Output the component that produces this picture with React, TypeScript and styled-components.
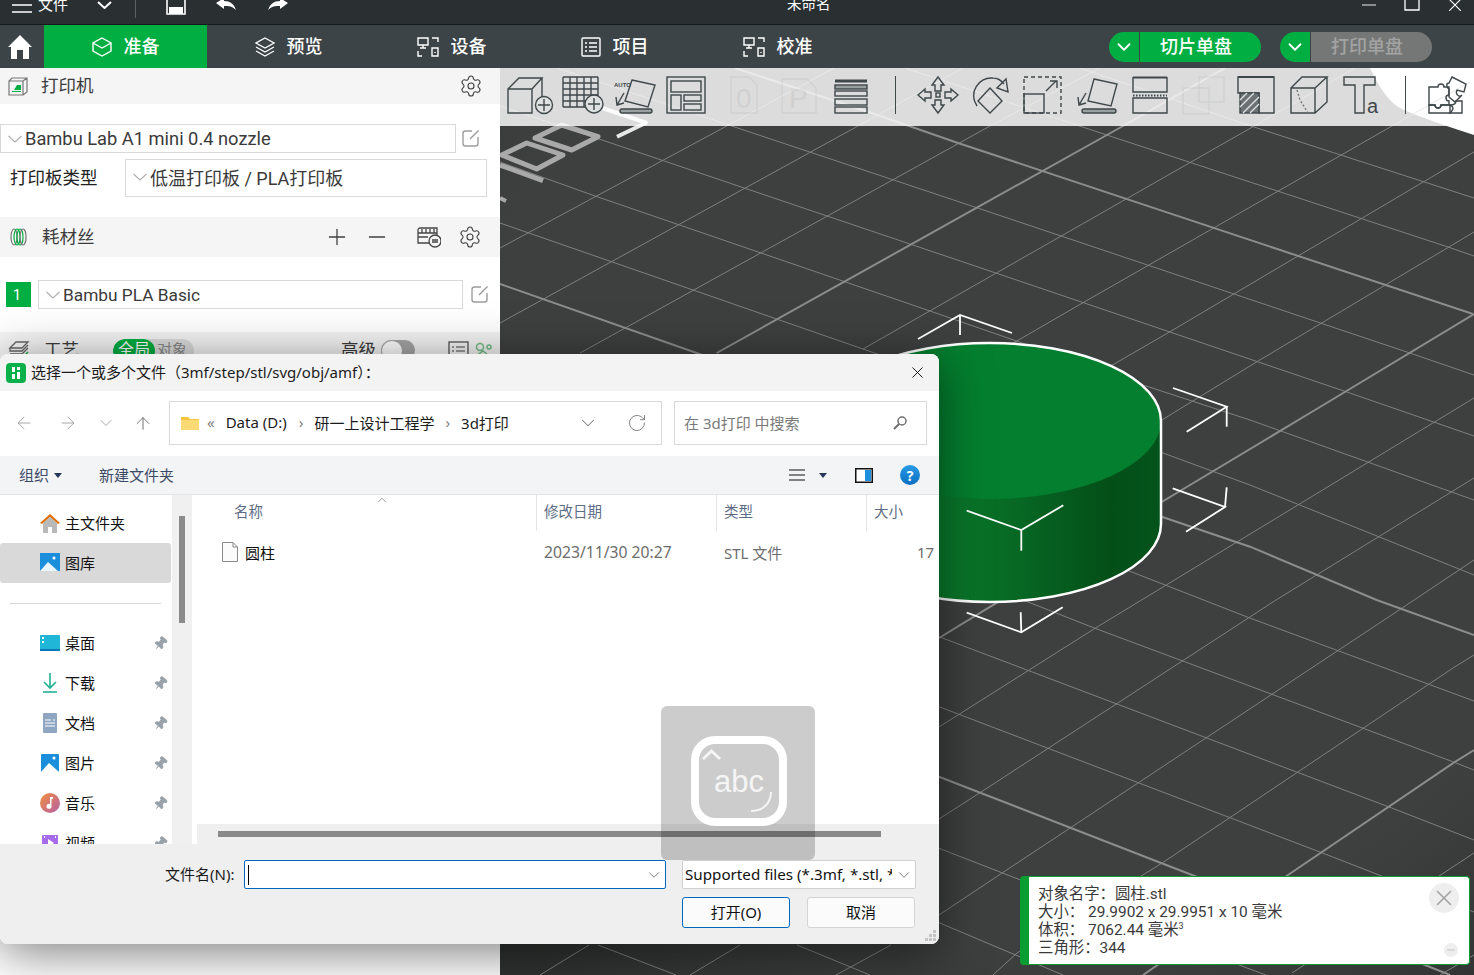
import React from "react";
import styled, { createGlobalStyle } from "styled-components";
import { ArrowLeft, ArrowRight, ArrowUp, ChevronDown, ChevronUp, Minus, Plus, Pin, RotateCw, Settings, X } from "lucide-react";

const APP_FONT = `Roboto, "Noto Sans CJK SC", sans-serif`;
const WIN_FONT = `"Noto Sans", "Noto Sans CJK SC", sans-serif`;
const GREEN = "#00ae42";

const Global = createGlobalStyle`
  html, body { margin: 0; padding: 0; background: #fff; }
  * { box-sizing: border-box; }
`;

const Page = styled.div`
  position: relative; width: 1474px; height: 975px; overflow: hidden;
  display: flex; flex-direction: column; font-family: ${APP_FONT};
`;

/* ---------- title bar ---------- */
const TitleBar = styled.div`
  height: 25px; flex: none; background: #2a2f31; border-bottom: 1px solid #14181a;
  display: flex; align-items: center; padding: 0 0 14px 12px; overflow: hidden; color: #fff;
`;
const TitleMenu = styled.span`font-size: 15px; margin-left: 6px; line-height: 20px; width: 30px; white-space: nowrap;`;
const TitleDivider = styled.i`width: 1px; height: 26px; background: #5c6264; margin-left: 23px; flex: none;`;
const TitleIcon = styled.svg<{ $ml: number }>`flex: none; margin-left: ${p => p.$ml}px; fill: none; stroke: #fff; stroke-width: 2;`;
const TitleText = styled.span`font-size: 14.5px; line-height: 20px; margin-left: 499px; width: 45px; white-space: nowrap;`;

/* ---------- nav bar ---------- */
const NavBar = styled.div`height: 43px; flex: none; background: #3c4447; display: flex; color: #fff;`;
const HomeSlot = styled.div`width: 44px; display: flex; align-items: center; justify-content: center; padding-right: 5px;`;
const NavTab = styled.div<{ $active?: boolean }>`
  width: 163px; display: flex; align-items: center; justify-content: center; gap: 12px;
  background: ${p => (p.$active ? GREEN : "transparent")};
  font-size: 18px; font-weight: 500;
`;
const NavTabLabel = styled.span`margin-bottom: 3px;`;
const ActionGroup = styled.div`display: flex; align-items: center; gap: 19px; margin-left: 250px;`;
const SplitButton = styled.div`display: flex; width: 152px; height: 30px; border-radius: 15px; overflow: hidden; gap: 1px;`;
const SplitArrow = styled.div`width: 30px; background: ${GREEN}; display: flex; align-items: center; justify-content: center; color: #fff;`;
const SplitLabel = styled.div<{ $off?: boolean }>`
  flex: 1; display: flex; align-items: center; justify-content: center; font-size: 18px; font-weight: 500; padding: 0 9px 3px 0;
  background: ${p => (p.$off ? "#757776" : GREEN)}; color: ${p => (p.$off ? "#a3a3a3" : "#fff")};
`;

/* ---------- main ---------- */
const Main = styled.div`flex: 1; display: flex; min-height: 0;`;
const Sidebar = styled.aside`width: 500px; flex: none; background: #fff; display: flex; flex-direction: column; color: #333;`;
const SectionHeader = styled.div<{ $h: number; $mt?: number }>`
  height: ${p => p.$h}px; margin-top: ${p => p.$mt ?? 0}px; flex: none; background: #f5f5f5;
  display: flex; align-items: center; padding-left: 8px; font-size: 17.5px;
`;
const SectionTitle = styled.span<{ $ml: number }>`margin: 0 0 4px ${p => p.$ml}px; color: #3c3c3c; white-space: nowrap;`;
const HeaderTool = styled.span<{ $ml: number }>`margin-left: ${p => p.$ml}px; display: flex; color: #404040; flex: none;`;
const PresetRow = styled.div<{ $mt: number }>`display: flex; align-items: center; flex: none; margin-top: ${p => p.$mt}px;`;
const PresetSelect = styled.div<{ $w: number; $h: number; $fs?: number; $cjk?: boolean }>`
  width: ${p => p.$w}px; height: ${p => p.$h}px; flex: none; border: 1px solid #d9d9d9; background: #fff;
  display: flex; align-items: center; padding-left: 7px; gap: 3px; font-size: ${p => p.$fs ?? 18}px; color: #3a3a3a; white-space: nowrap;
  padding-bottom: ${p => (p.$cjk ? 3 : 0)}px;
`;
const SelectChevron = styled.svg`flex: none; fill: none; stroke: #b0b0b0; stroke-width: 1.2;`;
const RowLabel = styled.span`width: 115px; margin: 0 0 3px 10px; font-size: 17.5px; color: #222; white-space: nowrap;`;
const Swatch = styled.span`
  width: 25px; height: 25px; background: ${GREEN}; color: #fff; font-size: 15px; margin: 0 7px 0 6px;
  display: flex; align-items: center; justify-content: center; flex: none; padding-right: 3px;
`;
const EditGlyph = styled.svg<{ $ml: number }>`margin-left: ${p => p.$ml}px; fill: none; stroke: #9d9d9d; stroke-width: 1.4; flex: none;`;
const ScopePill = styled.span`
  margin-left: 34px; width: 81px; height: 24px; border-radius: 12px; background: #dcdcdc; display: flex; font-size: 15px;
  color: #888; flex: none; overflow: hidden; margin-top: 2px;
`;
const ScopeOn = styled.span`width: 42px; background: ${GREEN}; color: #fff; border-radius: 12px; text-align: center; font-size: 16px; line-height: 22px;`;
const ScopeOff = styled.span`margin-left: 2px; line-height: 23px;`;
const Toggle = styled.span`
  width: 34px; height: 20px; border-radius: 10px; background: #a6a6a6; margin-left: 5px; flex: none; position: relative;
  &::after { content: ""; position: absolute; left: 0; top: 0; width: 20px; height: 20px; border-radius: 50%; background: #fff; border: 1px solid #a6a6a6; }
`;

/* ---------- viewport ---------- */
const Viewport = styled.main`flex: 1; position: relative; min-width: 0;`;
const Scene = styled.svg`position: absolute; inset: 0; width: 100%; height: 100%; display: block;`;
const Toolbar = styled.div`
  position: relative; height: 58px; display: flex; align-items: center; padding: 0 0 4px 7px;
  background: rgba(255, 255, 255, 0.82);
`;
const Tool = styled.svg<{ $ml?: number; $ghost?: boolean }>`
  flex: none; margin-left: ${p => p.$ml ?? 0}px; fill: none; stroke: #3f474a; stroke-width: 1.4;
  opacity: ${p => (p.$ghost ? 0.07 : 1)}; overflow: visible;
  text { stroke: none; fill: #3f474a; font-family: "Liberation Sans", sans-serif; }
`;
const ToolDivider = styled.i<{ $ml: number }>`width: 1px; height: 38px; background: #40484a; flex: none; margin-left: ${p => p.$ml}px;`;

/* ---------- file dialog ---------- */
const Dialog = styled.section`
  position: absolute; left: 0; top: 354px; width: 939px; height: 590px; border-radius: 8px; overflow: hidden;
  display: flex; flex-direction: column; background: #fff; font-family: ${WIN_FONT};
`;
const DialogShadow = styled.div`
  position: absolute; left: 0; top: 354px; width: 939px; height: 590px; border-radius: 8px;
  box-shadow: 0 8px 50px rgba(0, 0, 0, 0.52);
`;
const DialogTitle = styled.header`
  height: 37px; flex: none; background: #f3f3f3; display: flex; align-items: center; padding-left: 6px; font-size: 15px; color: #1a1a1a;
`;
const DialogTitleText = styled.span`margin: 0 0 2px 5px; width: 877px; white-space: nowrap;`;
const AddressRow = styled.div`height: 65px; flex: none; display: flex; padding: 10px 0 11px 0; background: #fff;`;
const NavCluster = styled.div`width: 169px; flex: none; display: flex; align-items: center; padding-left: 14px;`;
const NavGlyph = styled.span<{ $ml?: number; $dark?: boolean }>`
  width: 20px; display: flex; justify-content: center; margin-left: ${p => p.$ml ?? 0}px; color: ${p => (p.$dark ? "#666" : "#a0a0a0")};
`;
const AddressBox = styled.div`
  width: 493px; flex: none; border: 1px solid #d9d9d9; display: flex; align-items: center; padding-left: 11px; font-size: 15px; color: #1b1b1b; white-space: nowrap;
`;
const Crumb = styled.span<{ $ml: number; $muted?: boolean }>`
  display: flex; margin: 0 0 2px ${p => p.$ml}px; color: ${p => (p.$muted ? "#808080" : "#1b1b1b")};
`;
const CrumbTool = styled.span<{ $ml: number }>`display: flex; margin-left: ${p => p.$ml}px; color: #7a7a7a;`;
const SearchBox = styled.div`
  width: 253px; flex: none; margin-left: 12px; border: 1px solid #d9d9d9; display: flex; align-items: center; padding-left: 9px; font-size: 15px; color: #7a7a7a;
`;
const CommandBar = styled.div`
  height: 39px; flex: none; background: #f3f4f6; border-bottom: 1px solid #e4e4e4; display: flex; align-items: center; padding-left: 19px; font-size: 15px; color: #3b4a66;
`;
const Caret = styled.i<{ $ml: number }>`
  width: 0; height: 0; border: 4px solid transparent; border-top: 5px solid #26375a; border-bottom: 0; margin-left: ${p => p.$ml}px; flex: none;
`;
const CommandLabel = styled.span<{ $ml: number; $w: number }>`margin: 0 0 2px ${p => p.$ml}px; width: ${p => p.$w}px; flex: none; white-space: nowrap;`;
const PaneIcon = styled.svg`margin-left: 28px; flex: none;`;
const HelpBadge = styled.span`
  width: 20px; height: 20px; border-radius: 50%; background: linear-gradient(#2a9ae6, #0a6fc2); color: #fff; font-size: 14px; font-weight: 700;
  display: flex; align-items: center; justify-content: center; margin-left: 27px; flex: none;
`;
const DialogBody = styled.div`flex: 1; display: flex; min-height: 0;`;
const NavPane = styled.nav`width: 172px; flex: none; padding-top: 8px; overflow: hidden; height: 350px;`;
const NavItem = styled.div<{ $selected?: boolean }>`
  height: 40px; display: flex; align-items: center; padding-left: 40px; font-size: 15px; color: #111; width: 171px;
  background: ${p => (p.$selected ? "#d9d9d9" : "transparent")}; border-radius: 3px;
`;
const NavLabel = styled.span`margin: 0 0 2px 5px; width: 88px; white-space: nowrap; flex: none;`;
const PinIcon = styled(Pin)`transform: rotate(40deg); color: #98a2a9; fill: #98a2a9; flex: none;`;
const NavDivider = styled.div`height: 40px; width: 171px; padding: 20px 10px 0; &::after { content: ""; display: block; height: 1px; background: #d8d8d8; }`;
const NavTrack = styled.div`width: 20px; flex: none; background: #f0f0f0; padding: 21px 0 0 7px;`;
const NavThumb = styled.div`width: 6px; height: 107px; background: #8b8b8b;`;
const ListPane = styled.div`flex: 1; min-width: 0; display: flex; flex-direction: column; border-left: 2px solid #fff; position: relative; overflow: hidden;`;
const ListGrid = styled.div`display: grid; grid-template-columns: 342px 180px 150px 73px; flex: none;`;
const ListHead = styled(ListGrid)`height: 36px;`;
const HeadCell = styled.div<{ $first?: boolean }>`
  padding-left: ${p => (p.$first ? 40 : 7)}px; font-size: 14.5px; color: #5d6c86; line-height: 33px;
  border-left: ${p => (p.$first ? "0" : "1px solid #e4e4e4")}; white-space: nowrap;
`;
const SortMark = styled(ChevronUp)`position: absolute; left: 181px; top: -2px; color: #666;`;
const FileRow = styled(ListGrid)`height: 36px; margin-top: 3px; align-items: center; font-size: 15px; color: #6d6d6d;`;
const FileName = styled.div`display: flex; align-items: center; padding-left: 28px; color: #111; gap: 7px;`;
const FileCell = styled.div<{ $right?: boolean; $fs?: number }>`
  padding-left: ${p => (p.$right ? 51 : 8)}px; white-space: nowrap; overflow: hidden; font-size: ${p => p.$fs ?? 15}px;
`;
const ListSpacer = styled.div`flex: 1;`;
const HScrollTrack = styled.div`height: 20px; flex: none; margin-left: 3px; background: #efefef; padding: 7px 0 0 21px;`;
const HScrollThumb = styled.div`width: 663px; height: 6px; background: #8a8a8a;`;
const DialogFooter = styled.footer`height: 100px; flex: none; background: #efefef; position: relative; font-size: 15px; color: #1a1a1a; padding-top: 16px;`;
const FooterRow = styled.div<{ $mt?: number; $pl: number }>`display: flex; align-items: center; margin-top: ${p => p.$mt ?? 0}px; padding-left: ${p => p.$pl}px;`;
const FooterLabel = styled.span`width: 79px; flex: none; white-space: nowrap; margin-bottom: 2px;`;
const NameInput = styled.div`
  width: 422px; height: 29px; flex: none; background: #fff; border: 1px solid #0067c0; border-radius: 2px; display: flex; align-items: center; padding: 0 2px 0 3px;
  justify-content: space-between; color: #666;
`;
const TextCaret = styled.i`width: 1px; height: 20px; background: #000;`;
const TypeSelect = styled.div`
  width: 234px; height: 29px; flex: none; margin-left: 16px; background: #fff; border: 1px solid #d0d0d0; border-radius: 2px;
  display: flex; align-items: center; padding: 0 0 0 2px; color: #666; font-size: 15.2px;
`;
const TypeText = styled.span`width: 207px; flex: none; overflow: hidden; white-space: nowrap; color: #111; margin: 0 3px 2px 0;`;
const DialogButton = styled.button<{ $primary?: boolean; $ml?: number }>`
  width: 108px; height: 31px; margin-left: ${p => p.$ml ?? 0}px; padding: 0 0 2px; flex: none; background: #fbfbfb; border-radius: 3px; font: inherit; color: #111;
  border: 1px solid ${p => (p.$primary ? "#0067c0" : "#d4d4d4")};
`;
const Grip = styled.svg`position: absolute; right: 2px; bottom: 2px; fill: #c4c4c4;`;

/* ---------- overlays ---------- */
const ImeHint = styled.div`
  position: absolute; left: 661px; top: 706px; width: 154px; height: 154px; border-radius: 6px; background: rgba(0, 0, 0, 0.2);
  display: flex; align-items: center; justify-content: center; padding: 0 0 5px 2px;
`;
const ImeKey = styled.div`
  width: 96px; height: 90px; border: 8px solid #fff; border-radius: 24px; position: relative; display: flex; align-items: center; justify-content: center;
  color: #f5f5f5; font-family: "Liberation Sans", sans-serif; font-size: 31px; padding-top: 2px;
`;
const ImeMarks = styled.svg`position: absolute; left: 0; top: 0; fill: none; stroke: #f5f5f5; stroke-width: 2;`;
const Toast = styled.div`
  position: absolute; left: 1020px; top: 876px; width: 450px; height: 89px; background: #fff; border: 1px solid #0a9d32; border-left: 9px solid #0a9d32;
  border-radius: 4px; padding: 8px 0 0 9px; font-size: 15.4px; line-height: 18px; color: #3a3a3a; white-space: pre;
`;
const ToastLine = styled.div``;
const Sup = styled.sup`font-size: 9px; line-height: 0; vertical-align: 6px;`;
const ToastClose = styled.span`
  position: absolute; right: 10px; top: 6px; width: 30px; height: 30px; border-radius: 50%; background: #eeeeee; color: #a2a2a2; display: flex; align-items: center; justify-content: center;
`;
const ToastMin = styled.span`
  position: absolute; right: 11px; top: 66px; width: 14px; height: 14px; border-radius: 50%; background: #eeeeee; color: #a8a8a8; display: flex; align-items: center; justify-content: center;
`;

/* ---------- drawings ---------- */
const thinLines: string[] = [
  "1080,68 1253,126.7 1474,198",
  "905,68 1106.7,135 1448,247 1474,256",
  "557,68 731.7,126 976.7,207.7 1410.7,353.3 1474,375",
  "500,106 600,139.3 996.7,273.3 1346,391.7 1474,436",
  "500,162 595,196 930,311 1143,385 1250,420 1474,500",
  "500,223 863,349 1163,453 1250,485 1474,575",
  "900,490 1126.7,570 1249,617.7 1338,650.7 1428,684 1474,701",
  "939,567 1023,600 1095,628.3 1272,694.3 1452.7,761.7 1474,770",
  "939,636.7 1388.3,806.7 1474,840",
  "939,706.7 1321.7,852.7 1474,912",
  "939,848.3 1247,968 1266,975",
  "939,922.7 1063,975",
  "598,945 676,975",
  "797,945 870,975",
  "500,248 726.7,126 834,68",
  "500,323 856.7,126.7 963,68",
  "580,353 990,126 1100,68",
  "863,349 1253,126.7 1355,68",
  "939,386 1083,302.7 1392,126 1470,82",
  "1000,430 1170,331.7 1474,152",
  "1050,490 1170,415 1257,361.7 1474,232",
  "939,727 1028,670.7 1095,628.3 1474,398",
  "939,819 980,792.7 1276,600 1474,478",
  "939,915 1001.7,873.3 1401.7,608.3 1474,560",
  "993,975 1017,953 1161.7,863.3 1453,668 1474,655",
  "1292,973 1474,853",
  "1440,975 1474,955",
  "540,975 589,945",
  "690,975 740,945",
  "836,975 891,945",
];
const majorLines: string[] = [
  "735,68 871.7,113 958,143 1473,314",
  "500,284 696.7,353 1161.7,516.7 1250,546.7 1376.7,600 1474,635",
  "939,776.7 1161.7,863.3 1420,963 1450,975",
  "716.7,353 1123,126 1225,68",
  "939,638 1160,503 1315,410 1474,314",
  "1143,975 1288,875 1452.7,763.3 1474,750",
];
const brackets: string[] = [
  "918,339 960,315 1012,333",
  "960,315 960,335",
  "1186.7,431.7 1226.7,406.7 1173,388",
  "1226.7,406.7 1226.7,426.7",
  "1186,531.7 1225,507 1172.7,488.3",
  "1225,507 1226.7,487.3",
  "966.7,612.7 1021.3,632.3 1062.7,607.3",
  "1021.3,632.3 1020.7,612.3",
  "966.7,510.7 1021.3,530 1063.3,505.3",
  "1021.3,530 1021.3,550.7",
];

const SceneArt = () => (
  <Scene viewBox="500 68 974 907" preserveAspectRatio="none">
    <defs>
      <radialGradient id="floor" gradientUnits="userSpaceOnUse" cx="1050" cy="380" r="780">
        <stop offset="0.72" stopColor="#3e403f" />
        <stop offset="1" stopColor="#2f3230" />
      </radialGradient>
      <linearGradient id="side" x1="0" x2="1" y1="0" y2="0">
        <stop offset="0" stopColor="#0c8a34" />
        <stop offset="0.38" stopColor="#0a7a2b" />
        <stop offset="0.62" stopColor="#066422" />
        <stop offset="0.85" stopColor="#044f18" />
        <stop offset="1" stopColor="#03541c" />
      </linearGradient>
    </defs>
    <rect x="500" y="68" width="974" height="907" fill="url(#floor)" />
    <path d="M1370 68Q1385 100 1400 108T1474 135V68Z" fill="#fff" />
    <g fill="none" stroke="#7e7f7e" strokeWidth="1">
      {thinLines.map(p => <polyline key={p} points={p} />)}
    </g>
    <g fill="none" stroke="#8b8c8b" strokeWidth="2">
      {majorLines.map(p => <polyline key={p} points={p} />)}
    </g>
    <g fill="none" stroke="#a9a9a9" strokeWidth="5" strokeLinejoin="round">
      <polygon points="535,138 561.7,125 598,136.7 571.7,150" />
      <polygon points="501.7,155 526.7,143 563,155 536.7,169" />
      <polyline points="500,165 543,180.7" strokeWidth="5" />
      <polyline points="500,198 506,201" strokeWidth="4" />
      <polyline points="617,136.7 646,122.7 590,104" stroke="#e8e8e8" strokeWidth="4" />
    </g>
    <path d="M819 421V524A171 78 0 0 0 1161 524V421Z" fill="url(#side)" />
    <ellipse cx="990" cy="421" rx="171" ry="78" fill="#047f2f" />
    <path d="M819 421A171 78 0 0 1 1161 421V524A171 78 0 0 1 819 524Z" fill="none" stroke="#fff" strokeWidth="2.5" />
    <g fill="none" stroke="#fff" strokeWidth="1.8">
      {brackets.map(p => <polyline key={p} points={p} />)}
    </g>
  </Scene>
);

const gridRows = [1, 7, 13, 19, 25, 31];
const gridCols = [1, 8, 15, 22, 29, 36];

const ToolbarIcons = () => (
  <>
    <Tool width="46" height="38" viewBox="0 0 46 38">
      <path d="M1 13H25V37H1Z M1 13 12 2H35L25 13 M35 2V21" />
      <circle cx="37" cy="29" r="8.5" fill="#dfe1e0" />
      <path d="M37 23V35M31 29H43" />
    </Tool>
    <Tool $ml={9} width="42" height="38" viewBox="0 0 42 38">
      {gridRows.map(y => <path key={y} d={`M1 ${y}H36`} />)}
      {gridCols.map(x => <path key={x} d={`M${x} 1V31`} />)}
      <circle cx="32" cy="28" r="9" fill="#dfe1e0" />
      <path d="M32 22V34M26 28H38" />
    </Tool>
    <Tool $ml={10} width="42" height="38" viewBox="0 0 42 38">
      <text x="0" y="11" fontSize="6" fontWeight="700">AUTO</text>
      <path d="M18 4 41 9 34 31 11 25Z" />
      <path d="M10 17 3 29M2 21 3 29 10 27" />
      <rect x="6" y="33" width="32" height="4" rx="2" fill="#9aa09f" />
    </Tool>
    <Tool $ml={10} width="40" height="38" viewBox="0 0 40 38">
      <rect x="1" y="1" width="38" height="36" />
      <rect x="5" y="5" width="30" height="11" />
      <rect x="5" y="19" width="10" height="15" />
      <rect x="18" y="19" width="17" height="6" />
      <rect x="18" y="28" width="17" height="6" />
    </Tool>
    <Tool $ml={24} $ghost width="28" height="38" viewBox="0 0 28 38">
      <path d="M1 1H19L27 9V37H1Z" />
      <text x="6" y="32" fontSize="28">0</text>
    </Tool>
    <Tool $ml={23} $ghost width="36" height="38" viewBox="0 0 36 38">
      <path d="M1 3H26L35 12V37H1Z" />
      <text x="8" y="32" fontSize="28">P</text>
    </Tool>
    <Tool $ml={17} width="34" height="38" viewBox="0 0 34 38">
      <path d="M1 5H33" strokeWidth="3" />
      <rect x="1" y="9" width="32" height="4" fill="#9aa09f" />
      <rect x="1" y="15" width="32" height="5" />
      <rect x="1" y="23" width="32" height="6" />
      <rect x="1" y="31" width="32" height="6" />
    </Tool>
    <ToolDivider $ml={27} />
    <Tool $ml={21} width="42" height="38" viewBox="0 0 42 38">
      <path d="M21 1 27 9H24V15H18V9H15Z" />
      <path d="M21 37 27 29H24V24H18V29H15Z" />
      <path d="M1 19 8 13V16H14V22H8V25Z" />
      <path d="M41 19 34 13V16H28V22H34V25Z" />
      <rect x="19" y="17" width="4" height="4" />
    </Tool>
    <Tool $ml={12} width="38" height="38" viewBox="0 0 38 38">
      <path d="M6 30C-3 16 8 1 22 2 27 2 30 4 33 8" />
      <path d="M35 3 37 16 26 12Z" />
      <path d="M19 12 31 25 19 37 7 25Z" />
    </Tool>
    <Tool $ml={14} width="39" height="38" viewBox="0 0 39 38">
      <rect x="1" y="1" width="37" height="36" strokeDasharray="4 3" />
      <rect x="1" y="18" width="20" height="19" />
      <path d="M23 15 33 5M27 5H34V12" />
    </Tool>
    <Tool $ml={14} width="42" height="38" viewBox="0 0 42 38">
      <path d="M18 3 41 8 35 30 12 25Z" />
      <path d="M10 17 3 29M2 21 3 29 10 27" />
      <rect x="6" y="33" width="34" height="4" rx="2" fill="#9aa09f" />
    </Tool>
    <Tool $ml={14} width="36" height="38" viewBox="0 0 36 38">
      <path d="M1 1.500H35" strokeWidth="2.200" />
      <path d="M1 1V16H35V1" />
      <path d="M1 19.500H35" strokeDasharray="1.500 1.500" strokeWidth="1.800" />
      <path d="M1 22H35V37H1Z" />
    </Tool>
    <Tool $ml={14} $ghost width="43" height="38" viewBox="0 0 43 38">
      <rect x="17" y="1" width="25" height="25" />
      <rect x="1" y="12" width="26" height="26" />
    </Tool>
    <Tool $ml={12} width="38" height="38" viewBox="0 0 38 38">
      <path d="M1 1H37V37H22V17H1Z" />
      <path d="M1 1H37" strokeWidth="2.200" />
      <rect x="3" y="17" width="19" height="20" fill="#6c7273" />
      <path d="M3 24 10 17M3 31 17 17M6 37 22 21M13 37 22 28" stroke="#dfe1e0" />
    </Tool>
    <Tool $ml={15} width="38" height="38" viewBox="0 0 38 38">
      <path d="M1 12H25V37H1Z M1 12 12 1H37L25 12 M37 1V26L25 37" />
      <path d="M7 14 10 24 18 37" strokeDasharray="2 2" stroke="#777" />
    </Tool>
    <Tool $ml={15} width="39" height="38" viewBox="0 0 39 38">
      <path d="M1 1H32V9H21V37H12V9H1Z" />
      <text x="24" y="37" fontSize="20">a</text>
    </Tool>
    <ToolDivider $ml={23} />
    <Tool $ml={22} width="41" height="38" viewBox="0 0 41 38">
      <path d="M1 11H10C10 7 16 7 16 11H21V19C17 19 17 25 21 25V29H13C13 33 7 33 7 29H1Z" />
      <path d="M24 1 38 8 36 16 29 14C27 18 31 22 34 19L27 26 21 21V13C18 11 18 7 21 7Z" />
      <path d="M1 29H7C7 33 13 33 13 29H22V37H1Z" />
      <path d="M22 29C26 31 26 33 22 37H34V25H28C28 28 25 29 22 29Z" />
    </Tool>
  </>
);

const NavBox = () => (
  <svg width="20" height="20" viewBox="0 0 20 20" fill="none" stroke="#fff" strokeWidth="1.4"><path d="M10 1 19 6V14L10 19 1 14V6ZM1 6 10 11 19 6" /></svg>
);
const NavLayers = () => (
  <svg width="20" height="20" viewBox="0 0 20 20" fill="none" stroke="#fff" strokeWidth="1.3"><path d="M10 1 19 6 10 11 1 6ZM1 10 10 15 19 10M1 14 10 19 19 14" /></svg>
);
const NavDevice = () => (
  <svg width="22" height="20" viewBox="0 0 22 20" fill="none" stroke="#fff" strokeWidth="1.4"><path d="M1 1H11V8H1ZM6 8V11M3 11H9M15 1H21V5M1 14V19H5M15 19H21V11H15ZM18 15V16" /></svg>
);
const NavList = () => (
  <svg width="20" height="20" viewBox="0 0 20 20" fill="none" stroke="#fff" strokeWidth="1.4"><rect x="1" y="1" width="18" height="18" rx="1" /><path d="M4 6H6M8 6H16M4 10H6M8 10H16M4 14H6M8 14H16" /></svg>
);
const Chev = () => (
  <SelectChevron width="14" height="8" viewBox="0 0 14 8"><path d="M.5 1 7 7 13.500 1" /></SelectChevron>
);
const EditIcon = ({ ml }: { ml: number }) => (
  <EditGlyph $ml={ml} width="19" height="19" viewBox="0 0 19 19">
    <path d="M11 2H4.500A2.500 2.500 0 0 0 2 4.500V14.500A2.500 2.500 0 0 0 4.500 17H14.500A2.500 2.500 0 0 0 17 14.500V8" />
    <path d="M9 10 17.500 1.500" />
  </EditGlyph>
);

const navIconProps = { width: 20, height: 20, viewBox: "0 0 20 20" };

const App = () => (
  <Page>
    <Global />
    <TitleBar>
      <svg width="20" height="16" viewBox="0 0 20 16" fill="none" stroke="#fff" strokeWidth="1.600"><path d="M0 8H20M0 15H20" /></svg>
      <TitleMenu>文件</TitleMenu>
      <TitleIcon $ml={29} width="15" height="8" viewBox="0 0 15 8"><path d="M1 1 7.500 7 14 1" /></TitleIcon>
      <TitleDivider />
      <TitleIcon $ml={30} width="20" height="20" viewBox="0 0 20 20"><path d="M1 1H15L19 5V19H1Z" strokeWidth="1.600" /><path d="M4 13H16V18H4Z" fill="#fff" /></TitleIcon>
      <TitleIcon $ml={30} width="20" height="14" viewBox="0 0 20 14"><path d="M0 5 8 0V3C14 3 18 6 20 12 16 8 13 8 8 8V11Z" fill="#fff" stroke="none" /></TitleIcon>
      <TitleIcon $ml={32} width="20" height="14" viewBox="0 0 20 14"><path d="M20 5 12 0V3C6 3 2 6 0 12 4 8 7 8 12 8V11Z" fill="#fff" stroke="none" /></TitleIcon>
      <TitleText>未命名</TitleText>
      <TitleIcon $ml={530} width="14" height="2" viewBox="0 0 14 2"><path d="M0 1H14" strokeWidth="1.200" stroke="#cfcfcf" /></TitleIcon>
      <TitleIcon $ml={28} width="16" height="12" viewBox="0 0 16 12"><path d="M1 -2H15V11H1Z" strokeWidth="1.300" /></TitleIcon>
      <TitleIcon $ml={29} width="12" height="12" viewBox="0 0 12 12"><path d="M0 0 12 12M12 0 0 12" strokeWidth="1.100" /></TitleIcon>
    </TitleBar>
    <NavBar>
      <HomeSlot>
        <svg width="24" height="24" viewBox="0 0 24 24" fill="#fff"><path d="M12 0 24 12H21V24H15V15H9V24H3V12H0Z" /></svg>
      </HomeSlot>
      <NavTab $active><NavBox /><NavTabLabel>准备</NavTabLabel></NavTab>
      <NavTab><NavLayers /><NavTabLabel>预览</NavTabLabel></NavTab>
      <NavTab><NavDevice /><NavTabLabel>设备</NavTabLabel></NavTab>
      <NavTab><NavList /><NavTabLabel>项目</NavTabLabel></NavTab>
      <NavTab><NavDevice /><NavTabLabel>校准</NavTabLabel></NavTab>
      <ActionGroup>
        <SplitButton><SplitArrow><ChevronDown size={22} strokeWidth={2} /></SplitArrow><SplitLabel>切片单盘</SplitLabel></SplitButton>
        <SplitButton><SplitArrow><ChevronDown size={22} strokeWidth={2} /></SplitArrow><SplitLabel $off>打印单盘</SplitLabel></SplitButton>
      </ActionGroup>
    </NavBar>
    <Main>
      <Sidebar>
        <SectionHeader $h={36}>
          <svg width="20" height="20" viewBox="0 0 20 20" fill="none" stroke="#777" strokeWidth="1.200"><path d="M1 5H15V19H1ZM1 5 4 2H19V16L15 19M15 5 19 2" /><path d="M4 15H13V16H4ZM6 14 9 9H13V14Z" fill={GREEN} stroke="none" /></svg>
          <SectionTitle $ml={13}>打印机</SectionTitle>
          <HeaderTool $ml={365}><Settings size={24} strokeWidth={1.1} /></HeaderTool>
        </SectionHeader>
        <PresetRow $mt={20}>
          <PresetSelect $w={456} $h={29} $fs={18.3}><Chev />Bambu Lab A1 mini 0.4 nozzle</PresetSelect>
          <EditIcon ml={5} />
        </PresetRow>
        <PresetRow $mt={6}>
          <RowLabel>打印板类型</RowLabel>
          <PresetSelect $w={362} $h={38} $cjk><Chev />低温打印板 / PLA打印板</PresetSelect>
        </PresetRow>
        <SectionHeader $h={40} $mt={20}>
          <svg width="20" height="20" viewBox="0 0 20 20" fill="none" strokeWidth="1.200" stroke="#777"><ellipse cx="6" cy="10" rx="3" ry="8" /><ellipse cx="9" cy="10" rx="3" ry="8" stroke={GREEN} /><ellipse cx="12" cy="10" rx="3" ry="8" stroke={GREEN} /><ellipse cx="15" cy="10" rx="3" ry="8" /></svg>
          <SectionTitle $ml={14}>耗材丝</SectionTitle>
          <HeaderTool $ml={229}><Plus size={26} strokeWidth={1.2} /></HeaderTool>
          <HeaderTool $ml={14}><Minus size={26} strokeWidth={1.2} /></HeaderTool>
          <HeaderTool $ml={27}>
            <svg width="24" height="22" viewBox="0 0 24 22" fill="none" stroke="#444" strokeWidth="1.300"><path d="M1 4C1 3 2 2 3 2H20V9M1 4V17H12M1 7H20M1 11H11M5 3V7M9 3V7M13 3V7M17 3V7" /><circle cx="18" cy="15" r="6" fill="#f5f5f5" /><path d="M15 14H21M15 16H21" /></svg>
          </HeaderTool>
          <HeaderTool $ml={17}><Settings size={24} strokeWidth={1.1} /></HeaderTool>
        </SectionHeader>
        <PresetRow $mt={23}>
          <Swatch>1</Swatch>
          <PresetSelect $w={425} $h={29} $fs={17.3}><Chev />Bambu PLA Basic</PresetSelect>
          <EditIcon ml={7} />
        </PresetRow>
        <SectionHeader $h={36} $mt={23}>
          <svg width="22" height="20" viewBox="0 0 22 20" fill="none" stroke="#666" strokeWidth="1.300"><path d="M2 8 8 2H20L14 8ZM2 8V11H14L20 5M2 14H14L20 8" /><path d="M2 18H14L20 12" stroke={GREEN} /></svg>
          <SectionTitle $ml={14}>工艺</SectionTitle>
          <ScopePill><ScopeOn>全局</ScopeOn><ScopeOff>对象</ScopeOff></ScopePill>
          <SectionTitle $ml={147}>高级</SectionTitle>
          <Toggle />
          <HeaderTool $ml={33}>
            <svg width="21" height="18" viewBox="0 0 21 18" fill="none" stroke="#444" strokeWidth="1.200"><rect x="1" y="1" width="19" height="16" /><path d="M4 6H6M8 6H17M4 10H6M8 10H17" /></svg>
          </HeaderTool>
          <HeaderTool $ml={5}>
            <svg width="18" height="18" viewBox="0 0 18 18" fill="none" stroke="#6fbf85" strokeWidth="1.500"><circle cx="6" cy="6" r="3.500" /><circle cx="15" cy="6" r="2" /><path d="M2 15 9 10 15 15" /></svg>
          </HeaderTool>
        </SectionHeader>
      </Sidebar>
      <Viewport>
        <SceneArt />
        <Toolbar><ToolbarIcons /></Toolbar>
      </Viewport>
    </Main>

    <DialogShadow />
    <Dialog>
      <DialogTitle>
        <svg width="20" height="20" viewBox="0 0 20 20"><rect width="20" height="20" rx="4" fill="#0ab14a" /><path d="M6 4H9V9H6ZM6 11H9V16H6ZM11 4H14V7H11ZM11 9H14V16H11Z" fill="#fff" /></svg>
        <DialogTitleText>选择一个或多个文件（3mf/step/stl/svg/obj/amf）：</DialogTitleText>
        <X size={19} strokeWidth={1.2} color="#111" />
      </DialogTitle>
      <AddressRow>
        <NavCluster>
          <NavGlyph><ArrowLeft size={22} strokeWidth={1.1} /></NavGlyph>
          <NavGlyph $ml={24}><ArrowRight size={22} strokeWidth={1.1} /></NavGlyph>
          <NavGlyph $ml={18}><ChevronDown size={20} strokeWidth={1.1} /></NavGlyph>
          <NavGlyph $ml={17} $dark><ArrowUp size={23} strokeWidth={1.1} /></NavGlyph>
        </NavCluster>
        <AddressBox>
          <svg width="18" height="14" viewBox="0 0 18 14"><path d="M0 1H7L9 3H18V14H0Z" fill="#f4c63f" /><rect y="4" width="18" height="10" fill="#fbd975" /></svg>
          <Crumb $ml={8} $muted>«</Crumb>
          <Crumb $ml={11}>Data (D:)</Crumb>
          <Crumb $ml={12} $muted>›</Crumb>
          <Crumb $ml={11}>研一上设计工程学</Crumb>
          <Crumb $ml={11} $muted>›</Crumb>
          <Crumb $ml={11}>3d打印</Crumb>
          <CrumbTool $ml={68}><ChevronDown size={22} strokeWidth={1.1} /></CrumbTool>
          <CrumbTool $ml={28}><RotateCw size={20} strokeWidth={1.1} /></CrumbTool>
        </AddressBox>
        <SearchBox>
          <CommandLabel $ml={0} $w={209}>在 3d打印 中搜索</CommandLabel>
          <svg width="14" height="14" viewBox="0 0 14 14" fill="none" stroke="#6f6f6f" strokeWidth="1.500"><circle cx="9" cy="5" r="4" /><path d="M6 8 1 13" strokeWidth="2" /></svg>
        </SearchBox>
      </AddressRow>
      <CommandBar>
        <CommandLabel $ml={0} $w={30}>组织</CommandLabel><Caret $ml={5} />
        <CommandLabel $ml={37} $w={690}>新建文件夹</CommandLabel>
        <svg width="16" height="14" viewBox="0 0 16 14" stroke="#111" strokeWidth="1.200"><path d="M0 2H16M0 7H16M0 12H16" /></svg>
        <Caret $ml={14} />
        <PaneIcon width="18" height="15" viewBox="0 0 18 15"><rect x=".75" y=".75" width="16.500" height="13.500" fill="#fff" stroke="#111" strokeWidth="1.500" /><rect x="10" y="2" width="6" height="11" fill="#1f8fdf" /></PaneIcon>
        <HelpBadge>?</HelpBadge>
      </CommandBar>
      <DialogBody>
        <NavPane>
          <NavItem>
            <svg {...navIconProps}><path d="M10 1 20 10 18 11 10 4 2 11 0 10Z" fill="#e26f00" /><path d="M3 10 10 4 17 10V20H12V14H8V20H3Z" fill="#b9b9b9" /></svg>
            <NavLabel>主文件夹</NavLabel>
          </NavItem>
          <NavItem $selected>
            <svg {...navIconProps}><rect width="20" height="18" fill="#1b8fdc" /><circle cx="14" cy="5" r="1.500" fill="#fff" /><path d="M0 18 8 9 18 18Z" fill="#eaf5fc" /></svg>
            <NavLabel>图库</NavLabel>
          </NavItem>
          <NavDivider />
          <NavItem>
            <svg {...navIconProps}><rect y="2" width="20" height="16" rx="1" fill="#1fb6d8" /><rect y="16" width="20" height="2" fill="#0a77b8" /><path d="M2 4H4V6H2ZM2 8H4V10H2Z" fill="#fff" /></svg>
            <NavLabel>桌面</NavLabel>
            <PinIcon size={15} strokeWidth={1.5} />
          </NavItem>
          <NavItem>
            <svg {...navIconProps}><path d="M10 0V14M4 9 10 15 16 9" fill="none" stroke="#1fb394" strokeWidth="1.600" /><path d="M3 19H17" stroke="#1fb394" strokeWidth="1.600" /></svg>
            <NavLabel>下载</NavLabel>
            <PinIcon size={15} strokeWidth={1.5} />
          </NavItem>
          <NavItem>
            <svg {...navIconProps}><rect x="3" width="14" height="20" rx="1" fill="#8ea6c2" /><path d="M5 7H11M13 7H15M5 10H15M5 13H15" stroke="#fff" strokeWidth="1" /></svg>
            <NavLabel>文档</NavLabel>
            <PinIcon size={15} strokeWidth={1.5} />
          </NavItem>
          <NavItem>
            <svg {...navIconProps}><rect x="1" y="1" width="18" height="18" rx="1" fill="#1b8fdc" /><circle cx="14" cy="5" r="1.500" fill="#fff" /><path d="M1 19 9 10 19 19Z" fill="#fff" /></svg>
            <NavLabel>图片</NavLabel>
            <PinIcon size={15} strokeWidth={1.5} />
          </NavItem>
          <NavItem>
            <svg {...navIconProps}><defs><linearGradient id="mus" x1="0" y1="0" x2="1" y2="1"><stop offset="0" stopColor="#f2903c" /><stop offset="1" stopColor="#b45fa8" /></linearGradient></defs><circle cx="10" cy="10" r="10" fill="url(#mus)" /><path d="M10 4H13V6H11.500V13A2.500 2.500 0 1 1 10 11Z" fill="#fff" /></svg>
            <NavLabel>音乐</NavLabel>
            <PinIcon size={15} strokeWidth={1.5} />
          </NavItem>
          <NavItem>
            <svg {...navIconProps}><rect x="2" y="2" width="16" height="16" rx="1" fill="#a66be8" /><path d="M4 3H5V5H4ZM15 3H16V5H15ZM8 6 14 10 8 14Z" fill="#fff" /></svg>
            <NavLabel>视频</NavLabel>
            <PinIcon size={15} strokeWidth={1.5} />
          </NavItem>
        </NavPane>
        <NavTrack><NavThumb /></NavTrack>
        <ListPane>
          <SortMark size={14} strokeWidth={1.1} />
          <ListHead>
            <HeadCell $first>名称</HeadCell>
            <HeadCell>修改日期</HeadCell>
            <HeadCell>类型</HeadCell>
            <HeadCell>大小</HeadCell>
          </ListHead>
          <FileRow>
            <FileName>
              <svg width="16" height="20" viewBox="0 0 16 20" fill="#fbfbfb" stroke="#8a8a8a"><path d="M.5.500H11L15.500 5V19.500H.5Z" /><path d="M11 .5V5H15.500" fill="none" /></svg>
              圆柱
            </FileName>
            <FileCell $fs={15.7}>2023/11/30 20:27</FileCell>
            <FileCell>STL 文件</FileCell>
            <FileCell $right>17</FileCell>
          </FileRow>
          <ListSpacer />
          <HScrollTrack><HScrollThumb /></HScrollTrack>
        </ListPane>
      </DialogBody>
      <DialogFooter>
        <FooterRow $pl={165}>
          <FooterLabel>文件名(N):</FooterLabel>
          <NameInput><TextCaret /><ChevronDown size={18} strokeWidth={1.1} /></NameInput>
          <TypeSelect><TypeText>Supported files (*.3mf, *.stl, *.svg)</TypeText><ChevronDown size={18} strokeWidth={1.1} /></TypeSelect>
        </FooterRow>
        <FooterRow $mt={8} $pl={682}>
          <DialogButton $primary>打开(O)</DialogButton>
          <DialogButton $ml={17}>取消</DialogButton>
        </FooterRow>
        <Grip width="12" height="12" viewBox="0 0 12 12"><path d="M8 0H11V3H8ZM4 4H7V7H4ZM8 4H11V7H8ZM0 8H3V11H0ZM4 8H7V11H4ZM8 8H11V11H8Z" /></Grip>
      </DialogFooter>
    </Dialog>

    <ImeHint>
      <ImeKey>
        abc
        <ImeMarks width="80" height="74" viewBox="0 0 80 74">
          <path d="M4 15 12.500 7 21 15" strokeWidth="3" />
          <path d="M72 48C72 60 63 67 52 67" />
        </ImeMarks>
      </ImeKey>
    </ImeHint>

    <Toast>
      <ToastLine>对象名字：圆柱.stl</ToastLine>
      <ToastLine>大小： 29.9902 x 29.9951 x 10 毫米</ToastLine>
      <ToastLine>体积： 7062.44 毫米<Sup>3</Sup></ToastLine>
      <ToastLine>三角形：344</ToastLine>
      <ToastClose><X size={26} strokeWidth={1.5} /></ToastClose>
      <ToastMin><Minus size={12} strokeWidth={1.2} /></ToastMin>
    </Toast>
  </Page>
);

export default App;
